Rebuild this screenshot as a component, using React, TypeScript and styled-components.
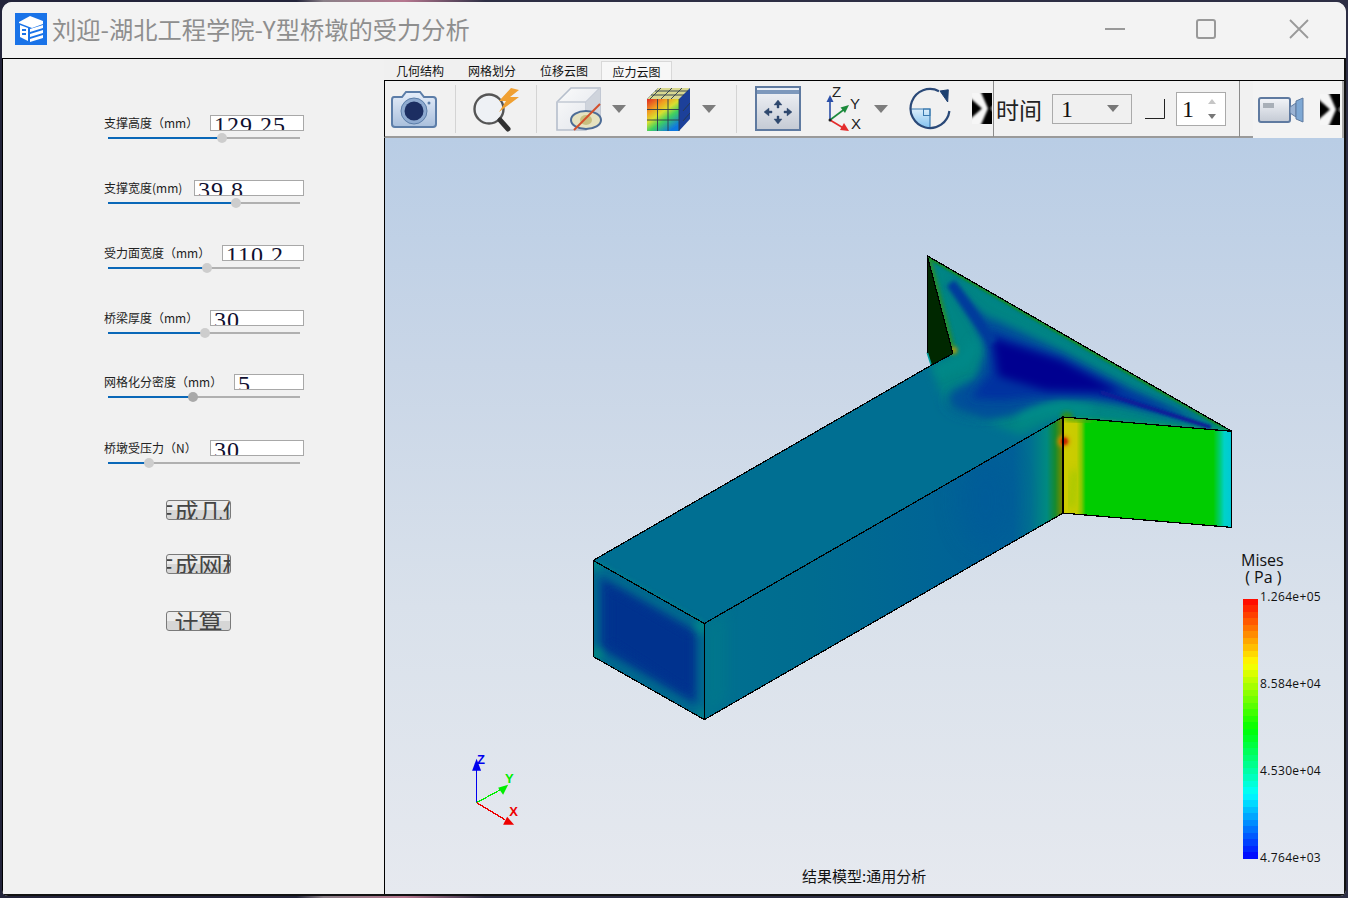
import React from "react";
import styled, { createGlobalStyle } from "styled-components";

const Global = createGlobalStyle`
  html, body { margin: 0; padding: 0; background: #25263a; }
  #root { width: 1348px; height: 898px; overflow: hidden; }
  * { box-sizing: border-box; }
`;

const CJK = `"Noto Sans CJK SC", "Noto Sans", sans-serif`;
const SERIF = `"Liberation Serif", "Noto Sans CJK SC", serif`;

const Desktop = styled.div`
  width: 1348px; height: 898px; padding: 2px;
  background: linear-gradient(90deg, #23243a 0 22%, #8a8088 24%, #b6778f 30%, #2d2e44 36%, #2d2e44 100%);
`;
const Win = styled.div`
  width: 1344px; height: 894px; display: flex; flex-direction: column;
  background: #f0f0f0; border-radius: 10px 10px 6px 6px; overflow: hidden;
`;
const TitleBar = styled.div`
  height: 56px; flex: none; display: flex; align-items: center; background: #f3f3f3;
  padding-left: 13px; padding-bottom: 2px;
`;
const TitleText = styled.div`
  font: 400 24.25px/32px ${CJK}; color: #8e8e8e; margin-left: 5px; white-space: nowrap; flex: 1;
`;
const WinBtn = styled.svg`
  flex: none; display: block; margin-right: ${(p: { $mr: number }) => p.$mr}px;
`;
const Body = styled.div`
  flex: 1; min-height: 0; display: flex;
  border: 1px solid #000; border-bottom: 2px solid #111; border-right: 2px solid #111; border-top: 1px solid #000;
`;
const LeftPanel = styled.div`
  width: 381px; flex: none; padding: 56px 0 0 101px; display: flex; flex-direction: column; background: #f1f1f1;
`;
const Row = styled.div<{ $mt: number }>`
  width: 200px; margin-top: ${(p) => p.$mt}px;
`;
const LabelLine = styled.div`
  display: flex; justify-content: space-between; align-items: center; height: 16px;
`;
const Label = styled.span`
  font: 400 12px/16px ${CJK}; color: #222; white-space: nowrap;
`;
const NumBox = styled.div<{ $w: number }>`
  width: ${(p) => p.$w}px; height: 16px; flex: none; background: #fff; border: 1px solid #a8a8a8;
  overflow: hidden; font: 400 24px/18px ${SERIF}; letter-spacing: 1px; color: #101030; padding-left: 3px; white-space: nowrap;
`;
const Slider = styled.div`
  position: relative; margin: 6px 4px 0 4px; height: 2px; background: #b0b0b0;
`;
const SliderFill = styled.div`
  height: 2px; background: #0a68b8;
`;
const Thumb = styled.div<{ $dark?: boolean }>`
  position: absolute; top: -4px; width: 10px; height: 10px; margin-left: -5px; border-radius: 50%;
  background: ${(p) => (p.$dark ? "#a9a9a9" : "#cdcdcd")};
`;
const ActionBtn = styled.div<{ $mt: number }>`
  width: 65px; height: 20px; margin: ${(p) => p.$mt}px 0 0 62px; display: flex; justify-content: center;
  overflow: hidden; border: 1px solid #7a7a7a; border-radius: 3px;
  background: linear-gradient(180deg, #ececec 0 50%, #d6d6d6 50% 100%);
  font: 400 24px/19px ${CJK}; color: #444; white-space: nowrap;
  span { flex: none; }
`;
const RightPanel = styled.div`
  flex: 1; min-width: 0; display: flex; flex-direction: column;
`;
const Tabs = styled.div`
  height: 21px; flex: none; display: flex; align-items: flex-end;
`;
const Tab = styled.div<{ $active?: boolean }>`
  width: 72px; height: 19px; text-align: center; font: 400 12px/20px ${CJK}; color: #111;
  ${(p) => (p.$active ? "background:#f7f7f7;border:1px solid #d8d8d8;border-bottom:none;width:71px;margin-left:1px;" : "")}
`;
const Toolbar = styled.div`
  height: 58px; flex: none; display: flex; align-items: center; background: #f1f1f1;
  border-top: 1px solid #000; border-left: 1px solid #000; border-bottom: 2px solid #9a9a9a; position: relative;
`;
const Icon = styled.svg<{ $ml: number }>`
  flex: none; display: block; margin-left: ${(p) => p.$ml}px;
`;
const Sep = styled.div<{ $ml: number; $dark?: boolean }>`
  flex: none; width: 1px; height: ${(p) => (p.$dark ? "56px" : "48px")}; margin-left: ${(p) => p.$ml}px;
  background: ${(p) => (p.$dark ? "#8c8c8c" : "#d4d4d4")};
`;
const TimeLabel = styled.span`
  font: 400 23px/30px ${CJK}; color: #222; margin-left: 2px; white-space: nowrap;
`;
const Combo = styled.div`
  flex: none; width: 80px; height: 30px; margin-left: 10px; border: 1px solid #aaa; background: #f0f0f0;
  display: flex; align-items: center; justify-content: space-between; padding: 0 12px 0 8px;
  font: 400 24px/28px ${SERIF}; color: #111;
`;
const Spin = styled.div`
  flex: none; width: 50px; height: 34px; margin-left: 11px; border: 1px solid #aaa; background: #fff;
  display: flex; align-items: center; justify-content: space-between; padding: 0 8px 0 5px;
  font: 400 24px/30px ${SERIF}; color: #111;
`;
const ToolEnd = styled.div`
  flex: none; align-self: stretch; width: 91px; margin-left: 13px; margin-bottom: -2px;
  background: #f3f3f3; display: flex; align-items: center; border-right: 2px solid #aaa;
`;
const Viewport = styled.div`
  flex: 1; min-height: 0; position: relative; overflow: hidden; border-left: 1px solid #000;
  background: linear-gradient(180deg, #b9cde5 0%, #c9d6e7 30%, #d9e1eb 62%, #e6e9ef 100%);
`;
const Scene = styled.svg`
  display: block; width: 100%; height: 100%;
`;
const Legend = styled.div`
  position: absolute; left: 855px; top: 414px; width: 100px; display: flex; flex-direction: column;
`;
const LegendTitle = styled.div`
  font: 400 16px/17px "Open Sans", sans-serif; color: #111; padding-left: 1px;
`;
const LegendUnit = styled.div`
  font: 400 16px/17px "Open Sans", sans-serif; color: #111; padding-left: 1px; white-space: pre;
`;
const LegendBody = styled.div`
  display: flex; margin-top: 13px; margin-left: 3px; height: 260px;
`;
const ColorBar = styled.div`
  width: 15px; height: 260px; flex: none;
`;
const LegendTicks = styled.div`
  display: flex; flex-direction: column; justify-content: space-between; margin: -10px 0 -7px 2px;
  font: 400 12px/16px "Open Sans", sans-serif; letter-spacing: 0.35px; color: #111;
`;
const Caption = styled.div`
  position: absolute; left: 417px; bottom: 8px; font: 400 15px/20px ${CJK}; color: #111; white-space: nowrap;
`;

const barColor = (t: number) => {
  const stops: [number, number, number, number][] = [
    [0, 0, 0, 255], [0.25, 0, 255, 255], [0.5, 0, 255, 0], [0.75, 255, 255, 0], [1, 255, 0, 0],
  ];
  for (let i = 0; i < 4; i++) {
    const a = stops[i], b = stops[i + 1];
    if (t <= b[0]) {
      const k = (t - a[0]) / (b[0] - a[0]);
      return `rgb(${Math.round(a[1] + (b[1] - a[1]) * k)},${Math.round(a[2] + (b[2] - a[2]) * k)},${Math.round(a[3] + (b[3] - a[3]) * k)})`;
    }
  }
  return "red";
};
const barBg = () => {
  const n = 40, parts: string[] = [];
  for (let i = 0; i < n; i++) {
    const c = barColor(1 - (i + 0.5) / n);
    parts.push(`${c} ${(i / n) * 100}% ${((i + 1) / n) * 100}%`);
  }
  return `linear-gradient(180deg, ${parts.join(",")})`;
};

const rows = [
  { label: "支撑高度（mm）", w: 94, val: "129.25", pos: 114, mt: 0 },
  { label: "支撑宽度(mm)", w: 110, val: "39.8", pos: 128, mt: 41 },
  { label: "受力面宽度（mm）", w: 82, val: "110.2", pos: 99, mt: 41 },
  { label: "桥梁厚度（mm）", w: 94, val: "30", pos: 97, mt: 41 },
  { label: "网格化分密度（mm）", w: 70, val: "5", pos: 85, mt: 40, dark: true },
  { label: "桥墩受压力（N）", w: 94, val: "30", pos: 41, mt: 42 },
];

const Arrow = ({ ml }: { ml: number }) => (
  <Icon $ml={ml} width="14" height="8" viewBox="0 0 14 8"><path d="M0 0H14L7 8Z" fill="#7d7d7d" /></Icon>
);

const Chevron = ({ ml }: { ml: number }) => (
  <Icon $ml={ml} width="20" height="31" viewBox="0 0 20 31">
    <defs>
      <filter id="chb" x="-20%" y="-20%" width="140%" height="140%"><feGaussianBlur stdDeviation="1.2" /></filter>
      <clipPath id="chc"><rect width="20" height="31" /></clipPath>
    </defs>
    <rect width="20" height="31" fill="#f6f6f6" />
    <g clipPath="url(#chc)">
      <g filter="url(#chb)">
        <path d="M-3 4L10 15.5L-3 27Z" fill="#000" />
        <path d="M8 -3H24V34H8L16 15.5Z" fill="#000" />
        <path d="M23 12L19 15.5L23 19Z" fill="#aaa" />
      </g>
    </g>
  </Icon>
);

const soft = { filter: "url(#soft)" };

export default function App() {
  return (
    <>
      <Global />
      <Desktop>
        <Win>
          <TitleBar>
            <svg width="32" height="32" viewBox="0 0 32 32" style={{ flex: "none" }}>
              <rect width="32" height="32" fill="#1a73e8" />
              <path d="M4 9L15 3L28 8V11L17 15L4 10Z" fill="#fff" />
              <path d="M5 12L13 15V28L5 24Z" fill="#fff" />
              <path d="M15 16L28 12V15L15 19ZM15 21L28 17V20L15 24ZM15 26L28 22V25L15 29Z" fill="#fff" />
              <path d="M7 16H11V18H7ZM7 20H11V22H7Z" fill="#1a73e8" />
            </svg>
            <TitleText>刘迎-湖北工程学院-Y型桥墩的受力分析</TitleText>
            <WinBtn $mr={71} width="20" height="20" viewBox="0 0 20 20"><path d="M0 10H20" stroke="#999" strokeWidth="2" /></WinBtn>
            <WinBtn $mr={73} width="20" height="20" viewBox="0 0 20 20"><rect x="1" y="1" width="18" height="18" rx="2" fill="none" stroke="#999" strokeWidth="2" /></WinBtn>
            <WinBtn $mr={37} width="20" height="20" viewBox="0 0 20 20"><path d="M1 1L19 19M19 1L1 19" stroke="#999" strokeWidth="1.8" /></WinBtn>
          </TitleBar>
          <Body>
            <LeftPanel>
              {rows.map((r) => (
                <Row key={r.label} $mt={r.mt}>
                  <LabelLine>
                    <Label>{r.label}</Label>
                    <NumBox $w={r.w}>{r.val}</NumBox>
                  </LabelLine>
                  <Slider>
                    <SliderFill style={{ width: r.pos }} />
                    <Thumb $dark={r.dark} style={{ left: r.pos }} />
                  </Slider>
                </Row>
              ))}
              <ActionBtn $mt={36}><span>生成几何</span></ActionBtn>
              <ActionBtn $mt={34}><span>生成网格</span></ActionBtn>
              <ActionBtn $mt={37}><span>计算</span></ActionBtn>
            </LeftPanel>
            <RightPanel>
              <Tabs>
                <Tab>几何结构</Tab>
                <Tab>网格划分</Tab>
                <Tab>位移云图</Tab>
                <Tab $active>应力云图</Tab>
              </Tabs>
              <Toolbar>
                <svg width="0" height="0" style={{ position: "absolute" }}>
                  <defs>
                    <filter id="soft"><feGaussianBlur stdDeviation="0.45" /></filter>
                    <linearGradient id="camG" x1="0" y1="0" x2="0" y2="1"><stop offset="0" stopColor="#e6eefa" /><stop offset="1" stopColor="#a9bfdc" /></linearGradient>
                    <linearGradient id="cubeF" x1="0" y1="0" x2=".7" y2="1"><stop offset="0" stopColor="#e02820" /><stop offset=".3" stopColor="#f0a020" /><stop offset=".5" stopColor="#d8e030" /><stop offset=".7" stopColor="#40d060" /><stop offset="1" stopColor="#1078e0" /></linearGradient>
                    <linearGradient id="frameG" x1="0" y1="0" x2="0" y2="1"><stop offset="0" stopColor="#f2f4f8" /><stop offset="1" stopColor="#c4cad4" /></linearGradient>
                    <linearGradient id="whiteBox" x1="0" y1="0" x2="1" y2="1"><stop offset="0" stopColor="#fbfbfb" /><stop offset="1" stopColor="#dfe3ea" /></linearGradient>
                    <linearGradient id="quad" x1="0" y1="0" x2="0" y2="1"><stop offset="0" stopColor="#dceefb" /><stop offset="1" stopColor="#7fc0ee" /></linearGradient>
                  </defs>
                </svg>
                {/* camera */}
                <Icon $ml={6} width="46" height="40" viewBox="0 0 46 40" style={soft}>
                  <path d="M3 8H11L15 3H29L33 8H42Q45 8 45 11V35Q45 38 42 38H4Q1 38 1 35V11Q1 8 3 8Z" fill="url(#camG)" stroke="#5b7da8" strokeWidth="2" />
                  <circle cx="23" cy="22" r="13" fill="#8eaad0" stroke="#5b7da8" />
                  <circle cx="23" cy="22" r="9.5" fill="#1c2f62" />
                  <circle cx="38" cy="14" r="1.5" fill="#5b7da8" />
                </Icon>
                <Sep $ml={18} />
                {/* search + bolt */}
                <Icon $ml={16} width="48" height="46" viewBox="0 0 48 46" style={soft}>
                  <circle cx="17" cy="23" r="14.5" fill="#eef1f5" stroke="#555" strokeWidth="2.4" />
                  <path d="M28 34L36 43" stroke="#333" strokeWidth="5" strokeLinecap="round" />
                  <path d="M39 2L27 15L34 15L27 26L47 11L38 11L47 4Z" fill="#f0a030" />
                </Icon>
                <Sep $ml={16} />
                {/* hidden box */}
                <Icon $ml={19} width="46" height="46" viewBox="0 0 46 46" style={soft}>
                  <path d="M1 16L15 2H44V30L30 44H1Z" fill="url(#whiteBox)" stroke="#b6bfcc" strokeWidth="1.6" />
                  <path d="M1 16H30V44M30 16L44 2" fill="none" stroke="#c2c9d4" strokeWidth="1.6" />
                  <path d="M30 16L44 2V30L30 44Z" fill="#cfd4dc" />
                  <ellipse cx="30" cy="34" rx="15" ry="9" fill="#e6e2c0" stroke="#4d6c96" strokeWidth="2" />
                  <ellipse cx="30" cy="34" rx="6" ry="5" fill="#c8c080" />
                  <path d="M18 44L44 18" stroke="#d2502c" strokeWidth="2" />
                </Icon>
                <Arrow ml={10} />
                {/* colour cube */}
                <Icon $ml={20} width="44" height="44" viewBox="0 0 44 44" style={soft}>
                  <path d="M1 12L12 1H44V32L33 44H1Z" fill="#1a3f9a" />
                  <path d="M1 12L12 1H44L33 12Z" fill="#d8d890" />
                  <rect x="1" y="12" width="32" height="32" fill="url(#cubeF)" />
                  <path d="M11.5 12V44M22 12V44M1 22.5H33M1 33H33M33 12V44M5 8H38M9 4H42M15 1L4 12M26 1L15 12M36 1L25 12M37 24L44 16M37 34L44 26" stroke="#2a3a4c" strokeWidth=".9" fill="none" />
                </Icon>
                <Arrow ml={12} />
                <Sep $ml={20} />
                {/* move */}
                <Icon $ml={18} width="46" height="45" viewBox="0 0 46 45" style={soft}>
                  <rect x="1" y="1" width="44" height="43" fill="url(#frameG)" stroke="#5e7aa0" strokeWidth="2" />
                  <rect x="2" y="4" width="42" height="4" fill="#7d98bc" />
                  <rect x="2" y="2" width="42" height="1.5" fill="#e8eef6" />
                  <g fill="#2e486e" stroke="#2e486e">
                    <path d="M23 14L27 19H24V22H22V19H19ZM23 38L27 33H24V30H22V33H19ZM9 26L14 22V25H17V27H14V30ZM37 26L32 22V25H29V27H32V30Z" strokeWidth=".4" />
                  </g>
                </Icon>
                {/* axes */}
                <Icon $ml={24} width="38" height="46" viewBox="0 0 38 46">
                  <path d="M5 34V13" stroke="#2b4fa8" strokeWidth="1.6" />
                  <path d="M5 9L8.5 16H1.5Z" fill="#2b4fa8" />
                  <path d="M5 34L21 22" stroke="#1c8a3c" strokeWidth="1.6" />
                  <path d="M24 19L20 27L15.5 21.5Z" fill="#1c8a3c" />
                  <path d="M5 34L20 43" stroke="#e42c2c" strokeWidth="1.6" />
                  <path d="M24 45L15 44L19 37Z" fill="#e42c2c" />
                  <circle cx="5" cy="34" r="1.5" fill="#222" />
                  <text x="7" y="11" fontFamily="Liberation Sans, sans-serif" fontSize="15" fill="#222">Z</text>
                  <text x="25" y="23" fontFamily="Liberation Sans, sans-serif" fontSize="15" fill="#222">Y</text>
                  <text x="26" y="43" fontFamily="Liberation Sans, sans-serif" fontSize="15" fill="#222">X</text>
                </Icon>
                <Arrow ml={11} />
                {/* rotate */}
                <Icon $ml={21} width="42" height="44" viewBox="0 0 42 44" style={soft}>
                  <path d="M21 22H1.5A19.5 19.5 0 0 0 21 41.5Z" fill="url(#quad)" />
                  <path d="M1.5 22H21V41.5" fill="none" stroke="#3a7ab0" strokeWidth="1.2" />
                  <rect x="14.5" y="22" width="6.5" height="6.5" fill="none" stroke="#3a7ab0" strokeWidth="1" />
                  <path d="M30 4.2A19.5 19.5 0 1 0 40.4 24" fill="none" stroke="#2c4a78" strokeWidth="2.2" />
                  <path d="M31 4L39.3 2.8L38.7 15Z" fill="#1f3f70" stroke="#1f3f70" strokeWidth="1" />
                </Icon>
                <Chevron ml={21} />
                <Sep $ml={1} $dark />
                <TimeLabel>时间</TimeLabel>
                <Combo>1<svg width="12" height="7" viewBox="0 0 12 7"><path d="M0 0H12L6 7Z" fill="#777" /></svg></Combo>
                <Icon $ml={13} width="20" height="20" viewBox="0 0 20 20"><path d="M0 19.5H19.5V0" fill="none" stroke="#222" strokeWidth="1" /></Icon>
                <Spin>1
                  <svg width="10" height="22" viewBox="0 0 10 22"><path d="M1 6L5 1L9 6Z" fill="#c6c6c6" /><path d="M1 16L5 21L9 16Z" fill="#777" /></svg>
                </Spin>
                <Sep $ml={13} $dark />
                <ToolEnd>
                  <Icon $ml={5} width="46" height="26" viewBox="0 0 46 26" style={soft}>
                    <rect x="1" y="1" width="31" height="24" rx="2" fill="url(#frameG)" stroke="#5e7aa0" strokeWidth="2" />
                    <rect x="5" y="6" width="11" height="5" fill="#a8afb8" />
                    <path d="M32 10L38 6V20L32 16Z" fill="#9cb4d4" stroke="#5e7aa0" />
                    <path d="M38 4L45 1V25L38 22Z" fill="#7ea8d4" stroke="#5e7aa0" />
                  </Icon>
                  <Chevron ml={16} />
                </ToolEnd>
              </Toolbar>
              <Viewport>
                <Scene viewBox="385 138 958 756" preserveAspectRatio="xMinYMin slice">
                  <defs>
                    <clipPath id="topClip"><path d="M593 560L930.7 365L952.3 353.3L926.7 255.7L1231 431L1062.3 416.7L704 623Z" /></clipPath>
                    <clipPath id="frontClip"><path d="M704 623L1062.3 416.7V512.7L704 719Z" /></clipPath>
                    <clipPath id="endClip"><path d="M593 560L704 623V719L593 656Z" /></clipPath>
                    <clipPath id="rightClip"><path d="M1062.3 416.7L1231 431V527L1062.3 512.7Z" /></clipPath>
                    <filter id="b1" x="-50%" y="-50%" width="200%" height="200%"><feGaussianBlur stdDeviation="1.2" /></filter>
                    <filter id="b2" x="-50%" y="-50%" width="200%" height="200%"><feGaussianBlur stdDeviation="2" /></filter>
                    <filter id="b4" x="-50%" y="-50%" width="200%" height="200%"><feGaussianBlur stdDeviation="4" /></filter>
                    <filter id="b7" x="-50%" y="-50%" width="200%" height="200%"><feGaussianBlur stdDeviation="7" /></filter>
                    <filter id="b12" x="-50%" y="-50%" width="200%" height="200%"><feGaussianBlur stdDeviation="12" /></filter>
                    <linearGradient id="frontG" gradientUnits="userSpaceOnUse" x1="704" y1="0" x2="1062.3" y2="0">
                      <stop offset="0" stopColor="#007090" />
                      <stop offset=".3" stopColor="#006c90" />
                      <stop offset=".65" stopColor="#006495" />
                      <stop offset=".86" stopColor="#006098" />
                      <stop offset=".91" stopColor="#007091" />
                      <stop offset=".955" stopColor="#008a80" />
                      <stop offset=".978" stopColor="#158a30" />
                      <stop offset=".992" stopColor="#5c8a08" />
                      <stop offset="1" stopColor="#8c7a00" />
                    </linearGradient>
                    <linearGradient id="rightG" gradientUnits="userSpaceOnUse" x1="1062.3" y1="0" x2="1231" y2="0">
                      <stop offset="0" stopColor="#d0cc00" />
                      <stop offset=".08" stopColor="#c8cc00" />
                      <stop offset=".11" stopColor="#80c800" />
                      <stop offset=".135" stopColor="#00cc00" />
                      <stop offset=".89" stopColor="#00cc00" />
                      <stop offset=".93" stopColor="#00cc78" />
                      <stop offset=".955" stopColor="#00d2c8" />
                      <stop offset="1" stopColor="#00c8d8" />
                    </linearGradient>
                  </defs>

                  {/* end face */}
                  <g clipPath="url(#endClip)">
                    <rect x="590" y="555" width="120" height="170" fill="#006a8e" />
                    <path d="M600 576L696 631V704L600 648Z" fill="#00368f" filter="url(#b4)" />
                    <path d="M610 590L690 636V692L610 640Z" fill="#00308e" filter="url(#b4)" />
                    <circle cx="595" cy="562" r="8" fill="#008a8a" filter="url(#b4)" />
                    <circle cx="595" cy="654" r="7" fill="#008a80" filter="url(#b4)" />
                    <circle cx="703" cy="625" r="8" fill="#008a8a" filter="url(#b4)" />
                    <circle cx="702" cy="715" r="7" fill="#00808a" filter="url(#b4)" />
                  </g>
                  {/* front face */}
                  <g clipPath="url(#frontClip)">
                    <rect x="700" y="410" width="370" height="315" fill="url(#frontG)" />
                    <path d="M704 623L726 610V700L704 719Z" fill="#007c8a" filter="url(#b7)" opacity=".6" />
                    <ellipse cx="985" cy="500" rx="26" ry="45" fill="#005a9a" filter="url(#b12)" opacity=".6" />
                  </g>
                  {/* top face */}
                  <g clipPath="url(#topClip)">
                    <rect x="590" y="250" width="650" height="480" fill="#006f92" />
                    <path d="M926 255L1231 431L1062 417L1020 435L945 405L930 365L952 353Z" fill="#008584" filter="url(#b4)" />
                    <path d="M926.7 255.7L1231 431" stroke="#128a28" strokeWidth="5" filter="url(#b1)" />
                    <path d="M926.7 255.7L952.3 353.3" stroke="#2c9020" strokeWidth="6" filter="url(#b2)" />
                    <path d="M1075 418L1231 431" stroke="#089868" strokeWidth="5" filter="url(#b2)" />
                    <ellipse cx="985" cy="400" rx="38" ry="14" fill="#00489a" filter="url(#b7)" />
                    <path d="M948 280C960 292 972 306 985 316L1000 322L1060 350L1130 388L1212 427L1120 403L1060 398L1020 412L985 419L955 404L950 396L975 378L985 352L975 326Z" fill="#00509a" filter="url(#b4)" />
                    <path d="M988 330L1060 358L1130 393L1190 418L1090 396L1040 396L1000 400L970 398L990 372Z" fill="#0030a0" filter="url(#b4)" />
                    <path d="M992 338L1060 360L1120 392L1045 390L998 376Z" fill="#000090" filter="url(#b4)" />
                    <path d="M950 283C962 298 975 318 992 342" stroke="#003a9c" strokeWidth="10" fill="none" filter="url(#b2)" />
                    <path d="M1100 392L1210 427" stroke="#0a1e98" strokeWidth="4" fill="none" filter="url(#b1)" />
                    <path d="M1018 420C1040 406 1060 404 1090 411" stroke="#00908a" strokeWidth="7" fill="none" filter="url(#b4)" />
                    <path d="M935 372L965 360L976 340" stroke="#008a8a" strokeWidth="7" fill="none" filter="url(#b4)" />
                    <circle cx="953" cy="350" r="3.5" fill="#b09a10" filter="url(#b2)" />
                    <circle cx="1066" cy="417" r="6" fill="#2c9020" filter="url(#b2)" />
                    <path d="M593 560L704 623" stroke="#008a8a" strokeWidth="3" filter="url(#b2)" opacity=".7" />
                  </g>
                  {/* right face */}
                  <g clipPath="url(#rightClip)">
                    <rect x="1060" y="410" width="175" height="125" fill="url(#rightG)" />
                    <path d="M1064 418L1090 421" stroke="#50a810" strokeWidth="4" filter="url(#b2)" />
                    <path d="M1074 470L1070 508" stroke="#90c800" strokeWidth="7" filter="url(#b4)" opacity=".7" />
                  </g>
                  <circle cx="1063" cy="441" r="6" fill="#d88800" filter="url(#b2)" />
                  <circle cx="1063.5" cy="441" r="3.5" fill="#c82800" filter="url(#b1)" />
                  <path d="M926.7 255.7L952.3 353.3L930.7 365L926.7 352.3Z" fill="#002800" />
                  <path d="M926.7 352.3L930.7 365" stroke="#00a0a0" strokeWidth="1.6" />
                  <g fill="none" stroke="#000" strokeWidth="1.2" shapeRendering="crispEdges">
                    <path d="M593 560L930.7 365M952.3 353.3L930.7 365M926.7 352.3V255.7L1231 431V527L1062.3 512.7V416.7L1231 431M1062.3 416.7L704 623V719L593 656V560L704 623M704 719L1062.3 512.7M926.7 255.7L952.3 353.3" />
                  </g>
                  {/* triad */}
                  <path d="M476.5 802V766" stroke="#0000ee" strokeWidth="1.3" shapeRendering="crispEdges" />
                  <path d="M476.5 758L481 770H472Z" fill="#0000ee" />
                  <path d="M476.5 802L504 787" stroke="#00ee00" strokeWidth="1.3" shapeRendering="crispEdges" />
                  <path d="M508 784L503 794L498 787Z" fill="#00ee00" />
                  <path d="M476.5 802L505 819" stroke="#ee0000" strokeWidth="1.3" shapeRendering="crispEdges" />
                  <path d="M514 824L503 824L507 816Z" fill="#ee0000" />
                  <text x="477" y="763" fontFamily="Liberation Sans, sans-serif" fontWeight="700" fontSize="13" fill="#0000ee">Z</text>
                  <text x="505" y="782" fontFamily="Liberation Sans, sans-serif" fontWeight="700" fontSize="13" fill="#00ee00">Y</text>
                  <text x="509" y="815" fontFamily="Liberation Sans, sans-serif" fontWeight="700" fontSize="13" fill="#ee0000">X</text>
                </Scene>
                <Legend>
                  <LegendTitle>Mises</LegendTitle>
                  <LegendUnit>{" ( Pa )"}</LegendUnit>
                  <LegendBody>
                    <ColorBar style={{ background: barBg() }} />
                    <LegendTicks>
                      <span>1.264e+05</span>
                      <span>8.584e+04</span>
                      <span>4.530e+04</span>
                      <span>4.764e+03</span>
                    </LegendTicks>
                  </LegendBody>
                </Legend>
                <Caption>结果模型:通用分析</Caption>
              </Viewport>
            </RightPanel>
          </Body>
        </Win>
      </Desktop>
    </>
  );
}
